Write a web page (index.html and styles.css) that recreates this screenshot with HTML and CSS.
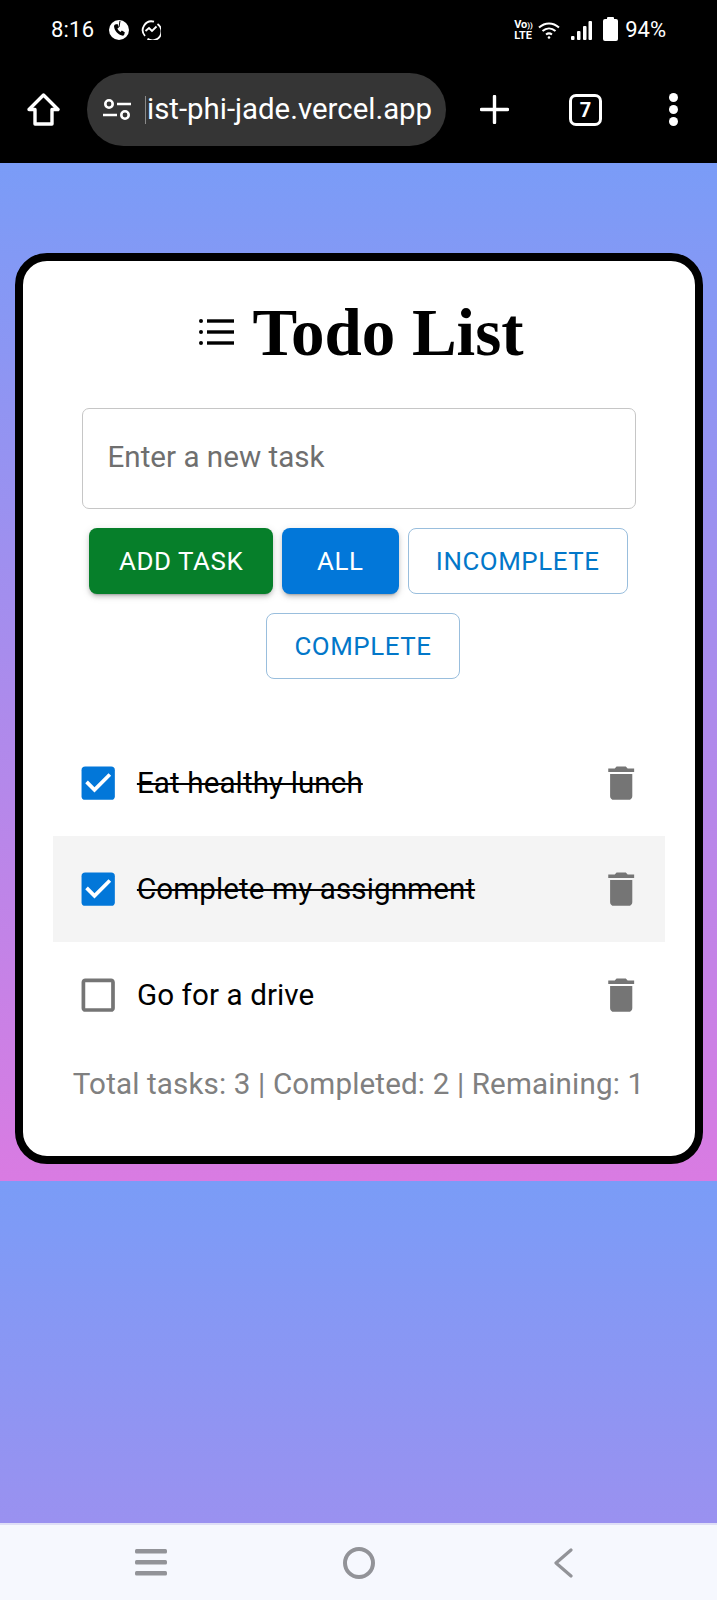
FILE: index.html
```html
<!DOCTYPE html>
<html lang="en">
<head>
<meta charset="utf-8">
<title>Todo List</title>
<link rel="stylesheet" href="styles.css">
</head>
<body>
<header class="chrome">
  <div class="status">
    <span class="clock">8:16</span>
    <svg class="st-ic st-first" width="20" height="20" viewBox="0 0 20 20"><circle cx="10" cy="10" r="10" fill="#fff"/><path d="M6 4.500l2.500-.5 1.400 3.400-1.500 1.200c.6 1.600 1.600 2.700 3.100 3.400l1.300-1.400 3 1.600-.6 2.600c-.4.7-1.300 1-2.200.8C8.600 14.300 5.800 11 5 6.500c0-.8.400-1.600 1-2z" fill="#000"/><path d="M11 1l-1 6" stroke="#000" stroke-width="1"/></svg>
    <svg class="st-ic st-second" width="20" height="20" viewBox="0 0 20 20" fill="none" stroke="#fff" stroke-width="1.800"><path d="M4 16a8.800 8.800 0 0 1 9-14.300M16.500 4a8.800 8.800 0 0 1-10 14.800"/><path d="M4.500 11l3.500-3 3 3 4.500-4.500"/></svg>
    <span class="spacer"></span>
    <span class="volte"><b>Vo<i>))</i></b><b>LTE</b></span>
    <svg class="wifi" width="22" height="17" viewBox="0 0 22 17" fill="none" stroke="#fff" stroke-width="2"><path d="M1 5.500c6-5.500 14-5.500 20 0M4.500 9c4-3.500 9-3.500 13 0M8 12.500c2-1.500 4-1.500 6 0"/><circle cx="11" cy="15.500" r="1.300" fill="#fff" stroke="none"/></svg>
    <svg class="signal" width="21" height="19" viewBox="0 0 21 19" fill="#fff"><rect x="0" y="15" width="3.500" height="4" rx="1"/><rect x="6" y="10" width="3.500" height="9" rx="1"/><rect x="12" y="5" width="3.500" height="14" rx="1"/><rect x="17.500" y="0" width="3.500" height="19" rx="1"/></svg>
    <svg class="battery" width="15" height="24" viewBox="0 0 15 24" fill="#fff"><rect x="4" y="0" width="7" height="3" rx="1"/><rect x="0" y="2" width="15" height="22" rx="2"/></svg>
    <span class="pct">94%</span>
  </div>
  <div class="browser">
    <svg class="home" width="33" height="33" viewBox="0 0 33 33" fill="none" stroke="#fff" stroke-width="3.400" stroke-linejoin="round"><path d="M16.500 2L31 16.500h-6V31H8V16.500H2z"/></svg>
    <div class="pill">
      <svg class="tune" width="28" height="21" viewBox="0 0 28 21" fill="none" stroke="#fff" stroke-width="2.600"><circle cx="6" cy="5" r="3.700"/><path d="M14 5h14M0 16h14"/><circle cx="22" cy="16" r="3.700"/></svg>
      <span class="url-clip"></span>
      <span class="url">ist-phi-jade.vercel.app</span>
    </div>
    <svg class="plus" width="29" height="29" viewBox="0 0 29 29" stroke="#fff" stroke-width="3.400" stroke-linecap="round"><path d="M14.500 1.500v26M1.500 14.500h26"/></svg>
    <span class="tabs">7</span>
    <span class="dots"><i></i><i></i><i></i></span>
  </div>
</header>

<main class="page">
  <section class="card">
    <h1 class="title">
      <svg class="title-ic" width="35" height="28" viewBox="0 0 35 28" fill="#000"><circle cx="2" cy="3" r="2"/><circle cx="2" cy="14" r="2"/><circle cx="2" cy="25" r="2"/><rect x="8" y="1.300" width="27" height="3.400"/><rect x="8" y="12.300" width="27" height="3.400"/><rect x="8" y="23.300" width="27" height="3.400"/></svg>
      <span>Todo List</span>
    </h1>
    <input class="task-input" type="text" placeholder="Enter a new task">
    <div class="actions">
      <button class="btn btn-green">Add Task</button>
      <button class="btn btn-blue">All</button>
      <button class="btn btn-outline">Incomplete</button>
      <button class="btn btn-outline">Complete</button>
    </div>
    <ul class="tasks">
      <li class="task">
        <svg class="box" viewBox="0 0 24 24"><rect x="3" y="3" width="18" height="18" rx="2" fill="#0277d9"/><path fill="#fff" d="M10 17l-5-5 1.410-1.410L10 14.170l7.590-7.590L19 8z"/></svg>
        <span class="task-text done">Eat healthy lunch</span>
        <svg class="trash" viewBox="0 0 24 24"><path d="M6 19c0 1.100.9 2 2 2h8c1.100 0 2-.9 2-2V7H6v12zM19 4h-3.500l-1-1h-5l-1 1H5v2h14V4z"/></svg>
      </li>
      <li class="task task-alt">
        <svg class="box" viewBox="0 0 24 24"><rect x="3" y="3" width="18" height="18" rx="2" fill="#0277d9"/><path fill="#fff" d="M10 17l-5-5 1.410-1.410L10 14.170l7.590-7.590L19 8z"/></svg>
        <span class="task-text done">Complete my assignment</span>
        <svg class="trash" viewBox="0 0 24 24"><path d="M6 19c0 1.100.9 2 2 2h8c1.100 0 2-.9 2-2V7H6v12zM19 4h-3.500l-1-1h-5l-1 1H5v2h14V4z"/></svg>
      </li>
      <li class="task">
        <svg class="box" viewBox="0 0 24 24"><path fill="#757575" d="M19 5v14H5V5h14m0-2H5c-1.100 0-2 .9-2 2v14c0 1.100.9 2 2 2h14c1.100 0 2-.9 2-2V5c0-1.100-.9-2-2-2z"/></svg>
        <span class="task-text">Go for a drive</span>
        <svg class="trash" viewBox="0 0 24 24"><path d="M6 19c0 1.100.9 2 2 2h8c1.100 0 2-.9 2-2V7H6v12zM19 4h-3.500l-1-1h-5l-1 1H5v2h14V4z"/></svg>
      </li>
    </ul>
    <p class="stats">Total tasks: 3 | Completed: 2 | Remaining: 1</p>
  </section>
</main>

<nav class="sysnav">
  <svg class="nav-recent" width="32" height="27" viewBox="0 0 32 27" fill="#929398"><rect y="0" width="32" height="4.500" rx="1.500"/><rect y="11" width="32" height="4.500" rx="1.500"/><rect y="22" width="32" height="4.500" rx="1.500"/></svg>
  <svg class="nav-home" width="32" height="32" viewBox="0 0 32 32" fill="none" stroke="#929398" stroke-width="4"><circle cx="16" cy="16" r="14"/></svg>
  <svg class="nav-back" width="20" height="30" viewBox="0 0 20 30" fill="none" stroke="#929398" stroke-width="3.200" stroke-linecap="round" stroke-linejoin="round"><path d="M18 2L3 15l15 13"/></svg>
</nav>
</body>
</html>
```
FILE: styles.css
```css
* { box-sizing: border-box; }
html, body { margin: 0; padding: 0; }
body {
  width: 717px;
  height: 1600px;
  display: flex;
  flex-direction: column;
  font-family: Roboto, sans-serif;
  overflow: hidden;
  background: #000;
}

/* Phone + browser chrome */
.chrome { height: 163px; background: #000; color: #fff; flex: none; }
.status {
  height: 60px;
  display: flex;
  align-items: center;
  padding: 0 51px 0 51px;
}
.clock { font-size: 22px; font-weight: 400; line-height: 1; letter-spacing: .2px; }
.st-ic { flex: none; }
.st-first { margin-left: 15px; }
.st-second { margin-left: 12px; }
.spacer { flex: 1; }
.volte {
  display: flex;
  flex-direction: column;
  font-size: 11px;
  line-height: 9.500px;
  width: 20px;
}
.volte b { font-weight: 700; }
.volte i { font-style: normal; font-size: 8px; }
.wifi { margin-left: 4px; }
.signal { margin-left: 11px; }
.battery { margin-left: 11px; margin-top: -2px; }
.pct { font-size: 22px; font-weight: 400; margin-left: 7px; line-height: 1; }

.browser {
  height: 103px;
  display: flex;
  align-items: center;
  padding: 0 0 4px 27px;
}
.home { flex: none; }
.pill {
  width: 359px;
  height: 73px;
  margin-left: 27px;
  border-radius: 37px;
  background: #353535;
  display: flex;
  align-items: center;
  padding-left: 16px;
  flex: none;
}
.tune { flex: none; }
.url-clip { width: 1px; height: 28px; background: #8a8a8a; margin-left: 14px; }
.url { font-size: 29.400px; margin-left: 1px; white-space: nowrap; line-height: 1; }
.plus { margin-left: 34px; flex: none; }
.tabs {
  width: 33px;
  height: 32px;
  margin-left: 60px;
  border: 3.400px solid #fff;
  border-radius: 7px;
  font-size: 20px;
  font-weight: 700;
  display: flex;
  align-items: center;
  justify-content: center;
  flex: none;
}
.dots {
  display: flex;
  flex-direction: column;
  gap: 3px;
  margin-left: 67px;
}
.dots i { width: 9px; height: 9px; border-radius: 50%; background: #fff; }

/* Page */
.page {
  flex: 1;
  padding-top: 90px;
  background-image: linear-gradient(180deg, #7a9cf7 0%, #d97be2 100%);
  background-size: 100% 1018px;
  background-repeat: repeat-y;
}
.card {
  width: 688px;
  margin: 0 auto;
  border: 8px solid #000;
  border-radius: 32px;
  background: #fff;
  padding: 34px 30px 52px;
}
.title {
  margin: 0 0 39px;
  height: 74px;
  padding-left: 6px;
  display: flex;
  align-items: center;
  justify-content: center;
  gap: 18px;
  font-family: "Liberation Serif", serif;
  font-weight: 700;
  font-size: 67px;
  line-height: 74px;
  color: #000;
}
.title-ic { flex: none; }

.task-input {
  display: block;
  width: 554px;
  height: 101px;
  margin: 0 auto;
  padding: 0 25px 4px;
  border: 1.500px solid #c6c6c6;
  border-radius: 7px;
  font-family: Roboto, sans-serif;
  font-size: 29.600px;
  color: #000;
  background: #fff;
}
.task-input::placeholder { color: #6f6f6f; opacity: 1; }

.actions {
  display: flex;
  flex-wrap: wrap;
  justify-content: center;
  row-gap: 19px;
  margin-top: 19px;
}
.btn {
  height: 66px;
  min-width: 117px;
  padding: 0 29.600px;
  border-radius: 8px;
  border: 0;
  font-family: Roboto, sans-serif;
  font-size: 25.900px;
  font-weight: 400;
  letter-spacing: .55px;
  text-transform: uppercase;
}
.btn + .btn { margin-left: 9px; }
.btn-green, .btn-blue {
  color: #fff;
  box-shadow: 0 4px 2px -3px rgba(0,0,0,.2), 0 3px 4px rgba(0,0,0,.14), 0 2px 9px rgba(0,0,0,.12);
}
.btn-green { background: #067f2a; }
.btn-blue { background: #0277d9; }
.btn-outline {
  padding: 0 27px;
  background: #fff;
  color: #0277c9;
  border: 1.500px solid #99bedd;
}

.tasks { list-style: none; margin: 51px 0 0; padding: 0; }
.task {
  height: 106px;
  display: flex;
  align-items: center;
  padding: 0 21.500px 0 23px;
}
.task-alt { background: #f4f4f4; }
.box { width: 44.400px; height: 44.400px; flex: none; }
.task-text { flex: 1; margin-left: 17px; font-size: 29.600px; letter-spacing: .1px; color: #000; }
.done { text-decoration: line-through; }
.trash { width: 44.400px; height: 44.400px; fill: #757575; flex: none; }
.stats {
  margin: 16px 0 0;
  text-align: center;
  font-size: 29.600px;
  line-height: 40px;
  letter-spacing: .14px;
  color: #808080;
  white-space: nowrap;
}

/* System nav */
.sysnav {
  height: 77px;
  flex: none;
  background: #f6f8fe;
  border-top: 2px solid #dfdff6;
  display: flex;
  align-items: center;
  padding-left: 135px;
}
.nav-home { margin-left: 176px; }
.nav-back { margin-left: 178px; }
```
